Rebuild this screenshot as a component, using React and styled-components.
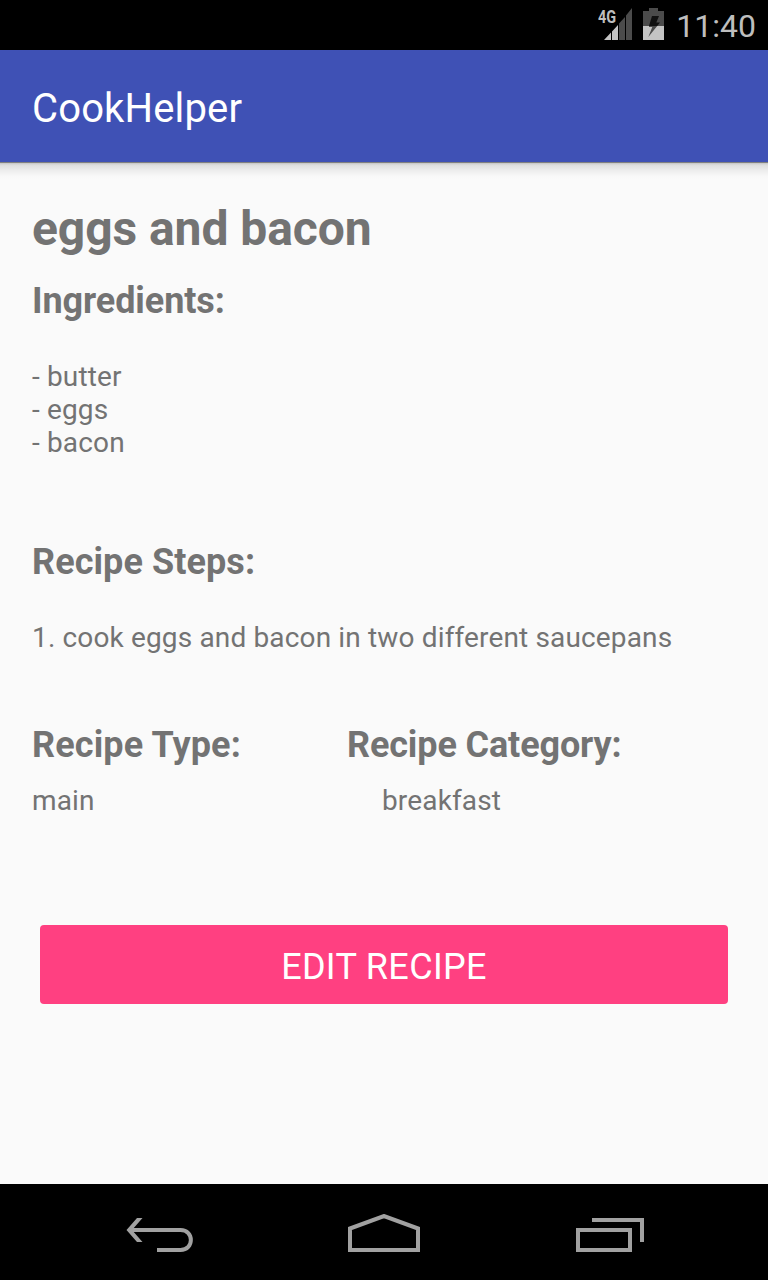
import React from "react";
import styled, { createGlobalStyle } from "styled-components";

const Global = createGlobalStyle`
  * { box-sizing: border-box; }
  body { margin: 0; background: #fafafa; font-family: Roboto, "Liberation Sans", sans-serif; }
`;
const Screen = styled.div`
  width: 768px;
  height: 1280px;
  display: flex;
  flex-direction: column;
  background: #fafafa;
  color: #737373;
  overflow: hidden;
`;
const StatusBar = styled.div`
  height: 50px;
  flex: none;
  background: #000;
  color: #bebebe;
  display: flex;
  align-items: center;
  justify-content: flex-end;
  padding-right: 12px;
`;
const Clock = styled.span`
  font-size: 32px;
  line-height: 48px;
  margin-left: 12px;
  padding-top: 2px;
`;
const NetworkLabel = styled.span`
  width: 6px;
  height: 50px;
  padding-top: 8px;
  white-space: nowrap;
  font-size: 18.5px;
  line-height: 18px;
  font-weight: 700;
  transform: scaleX(.78);
  transform-origin: left;
`;
const AppBar = styled.header`
  height: 112px;
  flex: none;
  background: #3f51b5;
  color: #fff;
  display: flex;
  align-items: center;
  padding: 4px 32px 0;
  font-size: 40px;
  letter-spacing: .15px;
`;
const Shadow = styled.div`
  height: 18px;
  flex: none;
  background: linear-gradient(#808080 0 1px, #c4c4c4 1px, #dedede 3px, #ececec 8px, #f8f8f8 14px, #fafafa);
`;
const Content = styled.main`
  flex: 1;
  padding: 21px 32px 0;
  display: flex;
  flex-direction: column;
`;
const Title = styled.h1`
  margin: 0;
  font-size: 48px;
  line-height: 56px;
  font-weight: 700;
  letter-spacing: -.07px;
`;
const Heading = styled.h2`
  margin: ${p => p.$top || 0}px 0 0;
  font-size: 36px;
  line-height: 42px;
  font-weight: 700;
  letter-spacing: ${p => p.$track || 0}px;
`;
const Text = styled.p`
  margin: ${p => p.$top || 0}px 0 0;
  padding-left: ${p => p.$indent || 0}px;
  font-size: 28px;
  line-height: 33px;
  letter-spacing: .15px;
  white-space: pre-line;
`;
const Columns = styled.div`
  display: grid;
  grid-template-columns: 315px 1fr;
  margin-top: 70px;
`;
const Button = styled.button`
  margin: 108px 8px 0;
  height: 79px;
  border: 0;
  border-radius: 4px;
  background: #ff4081;
  color: #fff;
  font: 400 36px Roboto, sans-serif;
  letter-spacing: .33px;
  padding: 4px 0 0;
`;
const NavBar = styled.nav`
  height: 96px;
  flex: none;
  background: #000;
  display: flex;
  justify-content: space-between;
  align-items: center;
  padding: 4px 124px 0 126px;
`;
const Icon = styled.svg`
  display: block;
  flex: none;
  fill: none;
  stroke: #a1a1a1;
  stroke-width: 4;
`;
const Glyph = styled.svg`
  display: block;
  flex: none;
  margin-left: ${p => p.$gap || 0}px;
`;

const Signal = () => (
  <Glyph width="28" height="50" viewBox="604 0 28 50">
    <path d="M604 40L611 32.5V40ZM612 40V31.5L618 25V40Z" fill="#c4c4c4" />
    <path d="M619 40V23.5L625 17V40ZM626 40V15.5L632 8V40Z" fill="#4b4b4b" />
  </Glyph>
);
const Battery = () => (
  <Glyph $gap={11} width="21" height="50" viewBox="643 0 21 50">
    <path d="M643 26V11H649V8H658V11H664V26Z" fill="#4b4b4b" />
    <path d="M643 26H664V40H643Z" fill="#c4c4c4" />
    <path d="M652 16H659L656.3 22.5H660L657.2 26H649Z" fill="#111" />
    <path d="M649 26H657.2L648.3 37L652.3 27H649Z" fill="#4b4b4b" />
  </Glyph>
);

export default function App() {
  return (
    <>
      <Global />
      <Screen>
        <StatusBar>
          <NetworkLabel>4G</NetworkLabel>
          <Signal />
          <Battery />
          <Clock>11:40</Clock>
        </StatusBar>
        <AppBar>CookHelper</AppBar>
        <Shadow />
        <Content>
          <Title>eggs and bacon</Title>
          <Heading $top={23} $track={-0.08}>Ingredients:</Heading>
          <Text $top={38}>{"- butter\n- eggs\n- bacon"}</Text>
          <Heading $top={82} $track={0.08}>Recipe Steps:</Heading>
          <Text $top={38}>1. cook eggs and bacon in two different saucepans</Text>
          <Columns>
            <div>
              <Heading $track={0.13}>Recipe Type:</Heading>
              <Text $top={18}>main</Text>
            </div>
            <div>
              <Heading $track={-0.13}>Recipe Category:</Heading>
              <Text $top={18} $indent={35}>breakfast</Text>
            </div>
          </Columns>
          <Button>EDIT RECIPE</Button>
        </Content>
        <NavBar>
          <Icon width="68" height="40" viewBox="126 1214 68 40">
            <path d="M130 1230H180.5C194.3 1230 194.3 1250 180.5 1250H157" />
            <path d="M137 1218H142.5L132 1230L142.5 1242H137L126.5 1230Z" fill="#a1a1a1" stroke="none" />
          </Icon>
          <Icon width="74" height="40" viewBox="348 1214 74 40">
            <path d="M350 1250V1228.5L384 1216L418 1228.5V1250Z" />
          </Icon>
          <Icon width="68" height="40" viewBox="576 1214 68 40">
            <path d="M578 1230H630V1250H578ZM592 1220H642V1242" />
          </Icon>
        </NavBar>
      </Screen>
    </>
  );
}
